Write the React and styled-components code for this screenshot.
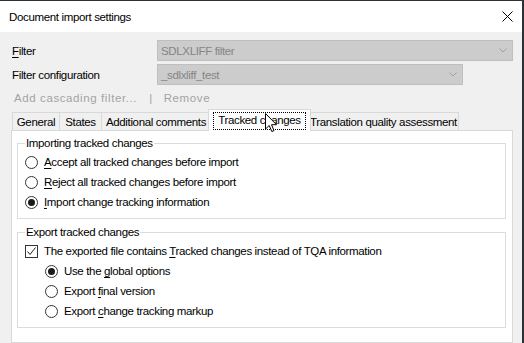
import React from "react";
import styled, { createGlobalStyle } from "styled-components";

const Global = createGlobalStyle`
  html, body {
    margin: 0;
    padding: 0;
    background: #2d3035;
  }
  body {
    font-family: "Liberation Sans", Arial, sans-serif;
    font-size: 11.5px;
    letter-spacing: -0.35px;
    color: #000;
  }
`;

const Window = styled.div`
  position: relative;
  width: 522px;
  height: 342px;
  margin-top: 1px;
  background: #f0f0f0;
  display: flex;
  flex-direction: column;
  overflow: hidden;
`;

const TitleBar = styled.div`
  height: 31px;
  flex: none;
  background: #fff;
  display: flex;
  align-items: center;
  justify-content: space-between;
  padding: 0 9px;
`;

const Title = styled.span`
  font-size: 11.5px;
`;

const Body = styled.div`
  flex: 1;
  display: flex;
  flex-direction: column;
  padding: 8px 9px 0 11px;
  min-height: 0;
`;

const FieldRow = styled.div`
  display: flex;
  align-items: center;
  height: 21px;
  margin-bottom: 3px;
`;

const Label = styled.label`
  width: 145px;
  padding-left: 1px;
  flex: none;
`;

const Select = styled.div`
  width: ${(p) => p.$width}px;
  height: 21px;
  box-sizing: border-box;
  border: 1px solid #bfbfbf;
  background: #cccccc;
  color: #858585;
  display: flex;
  align-items: center;
  justify-content: space-between;
  padding: 0 5px 0 3px;
`;

const LinkRow = styled.div`
  height: 20px;
  display: flex;
  align-items: center;
  padding-left: 3px;
  color: #a3a3a3;
  letter-spacing: 0.6px;
`;

const Sep = styled.span`
  margin: 0 11px 0 12px;
`;

const TabStrip = styled.div`
  display: flex;
  align-items: flex-end;
  height: 22px;
  padding-left: 1px;
  flex: none;
`;

const Tab = styled.div`
  position: relative;
  box-sizing: border-box;
  width: ${(p) => p.$width}px;
  height: ${(p) => (p.$active ? 22 : 18)}px;
  margin-right: ${(p) => (p.$active ? -3 : -1)}px;
  margin-left: ${(p) => (p.$active ? -2 : 0)}px;
  margin-bottom: ${(p) => (p.$active ? -1 : 0)}px;
  border: 1px solid #d9d9d9;
  border-bottom: none;
  background: ${(p) => (p.$active ? "#fff" : "#f0f0f0")};
  z-index: ${(p) => (p.$active ? 2 : 1)};
  display: flex;
  align-items: ${(p) => (p.$active ? "flex-start" : "center")};
  justify-content: center;
  padding-top: ${(p) => (p.$active ? 2 : 0)}px;
  white-space: nowrap;
`;

const Focus = styled.span`
  border: 1px dotted #000;
  padding: 0 4px 1px;
  line-height: 15px;
`;

const Page = styled.div`
  flex: 1;
  background: #fff;
  border: 1px solid #d9d9d9;
  padding: 5px 6px 0 5px;
  display: flex;
  flex-direction: column;
  gap: 6px;
`;

const Group = styled.fieldset`
  margin: 0;
  border: 1px solid #dcdcdc;
  padding: 2px 6px 6px 7px;
  min-width: 0;
`;

const Legend = styled.legend`
  padding: 0 1px;
  line-height: 14px;
`;

const OptionRow = styled.div`
  display: flex;
  align-items: center;
  height: 20px;
  padding-left: ${(p) => (p.$indent ? 20 : 0)}px;
  white-space: nowrap;
`;

const Radio = styled.span`
  width: 13px;
  height: 13px;
  box-sizing: border-box;
  border: 1px solid #333;
  border-radius: 50%;
  background: #fff;
  flex: none;
  display: flex;
  align-items: center;
  justify-content: center;
  margin-right: 6px;
  &::after {
    content: "";
    width: 7px;
    height: 7px;
    border-radius: 50%;
    background: #1a1a1a;
    display: ${(p) => (p.$checked ? "block" : "none")};
  }
`;

const Check = styled.span`
  width: 13px;
  height: 13px;
  box-sizing: border-box;
  border: 1px solid #333;
  background: #fff;
  flex: none;
  margin-right: 6px;
  display: flex;
  align-items: center;
  justify-content: center;
`;

const U = styled.u`
  text-underline-offset: 2px;
`;

const Cursor = styled.svg`
  position: absolute;
  left: 265px;
  top: 112px;
  z-index: 5;
`;

const Chevron = () => (
  <svg width="8" height="5" viewBox="0 0 8 5">
    <path d="M0.5 0.5 L4 4 L7.5 0.5" fill="none" stroke="#a0a0a0" strokeWidth="1" />
  </svg>
);

const CloseIcon = () => (
  <svg width="11" height="11" viewBox="0 0 11 11">
    <path d="M0.5 0.5 L10.5 10.5 M10.5 0.5 L0.5 10.5" stroke="#000" strokeWidth="1" />
  </svg>
);

const Option = ({ checked, indent, children }) => (
  <OptionRow $indent={indent}>
    <Radio $checked={checked} />
    <span>{children}</span>
  </OptionRow>
);

const tabs = [
  { name: "General", width: 48 },
  { name: "States", width: 43 },
  { name: "Additional comments", width: 110 },
  { name: "Tracked changes", width: 103, active: true },
  { name: "Translation quality assessment", width: 151 },
];

export default function App() {
  return (
    <>
      <Global />
      <Window>
        <TitleBar>
          <Title>Document import settings</Title>
          <CloseIcon />
        </TitleBar>
        <Body>
          <FieldRow>
            <Label>
              <U>F</U>ilter
            </Label>
            <Select $width={356}>
              <span>SDLXLIFF filter</span>
              <Chevron />
            </Select>
          </FieldRow>
          <FieldRow>
            <Label>Filter configuration</Label>
            <Select $width={306}>
              <span>_sdlxliff_test</span>
              <Chevron />
            </Select>
          </FieldRow>
          <LinkRow>
            <span>Add cascading filter...</span>
            <Sep>|</Sep>
            <span>Remove</span>
          </LinkRow>
          <TabStrip>
            {tabs.map((t) =>
              t.active ? (
                <Tab key={t.name} $width={t.width} $active>
                  <Focus>{t.name}</Focus>
                </Tab>
              ) : (
                <Tab key={t.name} $width={t.width}>
                  {t.name}
                </Tab>
              )
            )}
          </TabStrip>
          <Page>
            <Group>
              <Legend>Importing tracked changes</Legend>
              <Option>
                <U>A</U>ccept all tracked changes before import
              </Option>
              <Option>
                <U>R</U>eject all tracked changes before import
              </Option>
              <Option checked>
                <U>I</U>mport change tracking information
              </Option>
            </Group>
            <Group>
              <Legend>Export tracked changes</Legend>
              <OptionRow>
                <Check>
                  <svg width="11" height="11" viewBox="0 0 11 11">
                    <path d="M1.5 5.5 L4 8.5 L9.5 1.5" fill="none" stroke="#222" strokeWidth="1" />
                  </svg>
                </Check>
                <span>
                  The exported file contains <U>T</U>racked changes instead of TQA information
                </span>
              </OptionRow>
              <Option indent checked>
                Use the <U>g</U>lobal options
              </Option>
              <Option indent>
                Export <U>f</U>inal version
              </Option>
              <Option indent>
                Export <U>c</U>hange tracking markup
              </Option>
            </Group>
          </Page>
        </Body>
        <Cursor width="13" height="20" viewBox="0 0 13 20">
          <path
            d="M0.5 0.5 L0.5 16 L4.2 12.5 L6.8 18.5 L9 17.6 L6.5 11.7 L11.5 11.7 Z"
            fill="#fff"
            stroke="#000"
            strokeWidth="1"
            strokeLinejoin="miter"
          />
        </Cursor>
      </Window>
    </>
  );
}
